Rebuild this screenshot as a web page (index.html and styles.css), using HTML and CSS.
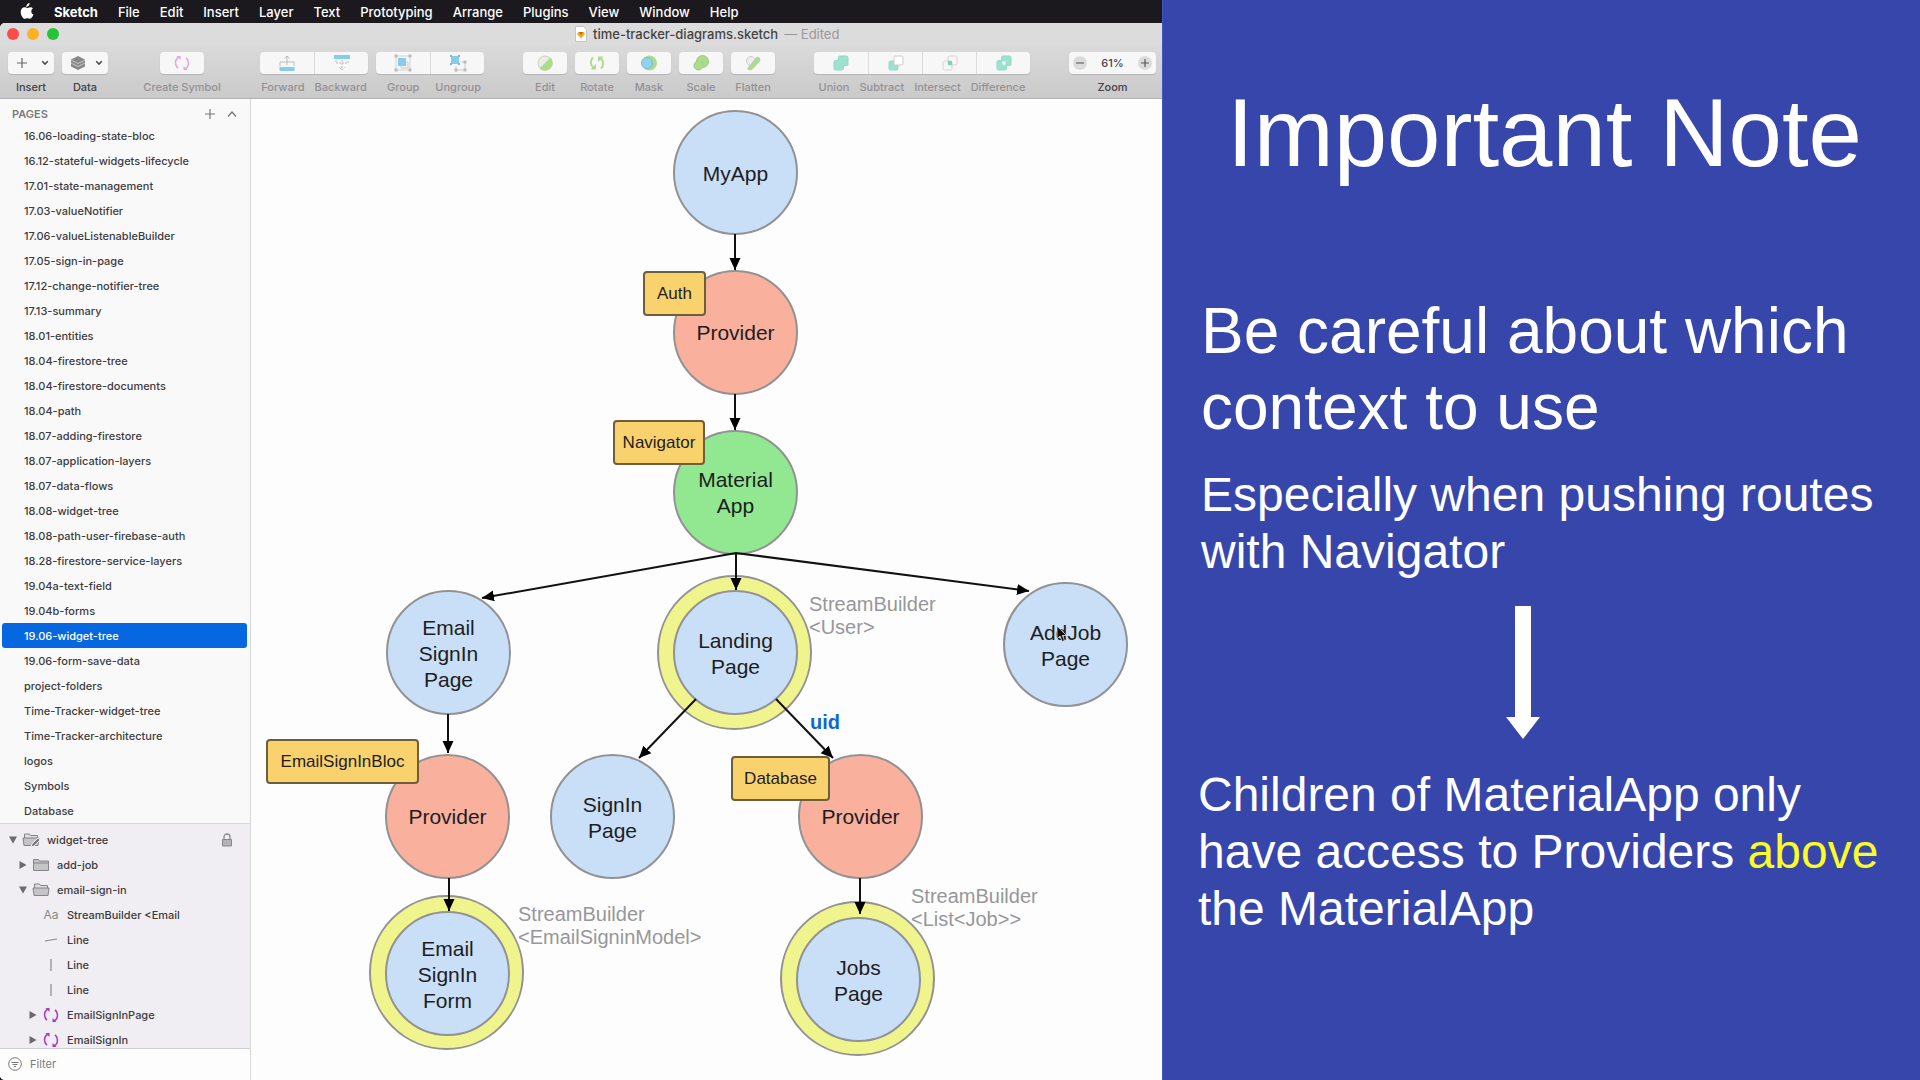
FILE: index.html
```html
<!DOCTYPE html>
<html lang="en">
<head>
<meta charset="utf-8">
<title>time-tracker-diagrams.sketch</title>
<link rel="stylesheet" href="styles.css">
</head>
<body>
<svg class="defs" aria-hidden="true">
  <symbol id="symbol-sync" viewBox="0 0 16 16"><path d="M6 1.500C2.500 3 1 6 1.800 9.500c.3 1.500 1 2.700 2.200 3.700M10 14.500c3.500-1.500 5-4.500 4.200-8-.3-1.500-1-2.700-2.200-3.700" fill="none" stroke="currentColor" stroke-width="1.500"/><path d="M2.500 1h4v4zM13.500 15h-4v-4z" fill="currentColor"/></symbol>
  <symbol id="symbol-folder" viewBox="0 0 18 16"><path d="M1.500 5V2.500h5l1 1.500h9v9.500h-15z" fill="#c4c3c6" stroke="#858487"/><path d="M1 6h16" stroke="#858487"/></symbol>
  <symbol id="symbol-folder-open" viewBox="0 0 18 16"><path d="M2.500 6V2h5l1 1.500h7V6" fill="#dddcdf" stroke="#858487"/><path d="M1 6h16l-1 7.500H2z" fill="#c4c3c6" stroke="#858487"/></symbol>
  <symbol id="symbol-right" viewBox="0 0 10 10"><path d="M1.500 1v8l7-4z" fill="#6b6a6d"/></symbol>
  <symbol id="symbol-down" viewBox="0 0 10 10"><path d="M1 1.500h8l-4 7z" fill="#6b6a6d"/></symbol>
  <symbol id="symbol-chevron" viewBox="0 0 8 6"><path d="M1.300 1.300 4 4.200l2.700-2.900" fill="none" stroke="#444" stroke-width="1.600"/></symbol>
</svg>

<main class="screen">
  <section class="desktop">
    <nav class="menubar" aria-label="Menu bar">
      <svg class="apple" viewBox="0 0 14 17" aria-hidden="true"><path d="M9.600 0c.1 1.200-.4 2.100-1 2.800-.6.700-1.500 1.200-2.300 1.100-.1-1.100.4-2.100 1-2.700C7.900.5 8.900.1 9.600 0zM12.900 5.600c-1 .7-1.600 1.600-1.600 2.900 0 1.500.9 2.600 2.100 3.100-.6 1.800-2 4.200-3.500 4.200-1 0-1.400-.6-2.600-.6s-1.600.6-2.500.6C2.900 15.800.7 12.200.7 9c0-3 1.900-4.700 3.900-4.700 1.100 0 2 .7 2.700.7.700 0 1.700-.8 3.100-.8 1 0 1.900.5 2.500 1.400z" fill="#fff"/></svg>
      <button class="menu menu-app">Sketch</button><button class="menu">File</button><button class="menu">Edit</button><button class="menu">Insert</button><button class="menu">Layer</button><button class="menu">Text</button><button class="menu">Prototyping</button><button class="menu">Arrange</button><button class="menu">Plugins</button><button class="menu">View</button><button class="menu">Window</button><button class="menu">Help</button>
    </nav>

    <div class="window">
      <header class="titlebar">
        <div class="lights">
          <button class="light light-close" aria-label="Close"></button><button class="light light-min" aria-label="Minimize"></button><button class="light light-max" aria-label="Zoom window"></button>
        </div>
        <div class="title">
          <svg width="12" height="16" viewBox="0 0 12 16" aria-hidden="true"><path d="M.5.500h8l3 3v12H.500z" fill="#fff" stroke="#c4c4c4"/><path d="M3.500 6h5L10 8l-4 4.500L2 8z" fill="#f6a623"/><path d="M4 6l2 3 2-3z" fill="#b96d10"/></svg>
          <h1 class="title-name">time-tracker-diagrams.sketch</h1><span class="title-state">— Edited</span>
        </div>
      </header>

      <div class="toolbar" role="toolbar" aria-label="Tools">
        <div class="tools">
          <div class="buttons"><button class="tool tool-menu" aria-labelledby="l-insert"><svg width="12" height="12" viewBox="0 0 12 12"><path d="M6 1v10M1 6h10" stroke="#666" stroke-width="1.200"/></svg><svg width="8" height="6"><use href="#symbol-chevron"/></svg></button></div>
          <div class="labels labels-on"><span id="l-insert">Insert</span></div>
        </div>
        <div class="tools">
          <div class="buttons"><button class="tool tool-menu" aria-labelledby="l-data"><svg width="16" height="16" viewBox="0 0 16 16"><path d="M1 4.500 8 1l7 3.500v7L8 15l-7-3.500z" fill="#888"/><path d="M1 5l7 3.500L15 5M1 8l7 3.500L15 8" fill="none" stroke="#c9c9c9"/></svg><svg width="8" height="6"><use href="#symbol-chevron"/></svg></button></div>
          <div class="labels labels-on"><span id="l-data">Data</span></div>
        </div>
        <div class="tools tools-symbol">
          <div class="buttons"><button class="tool tool-small sync-pale" aria-labelledby="l-create"><svg width="16" height="16"><use href="#symbol-sync"/></svg></button></div>
          <div class="labels"><span id="l-create">Create Symbol</span></div>
        </div>
        <div class="tools tools-order">
          <div class="buttons">
            <button class="tool" aria-labelledby="l-forward"><svg width="16" height="16" viewBox="0 0 16 16"><path d="M.5 12h15v4H.500z" fill="#86cdec"/><path d="M1 11V7h14v4M8 10V1M5.500 3.500 8 1l2.500 2.500" fill="none" stroke="#bbb"/></svg></button>
            <button class="tool" aria-labelledby="l-backward"><svg width="16" height="16" viewBox="0 0 16 16"><path d="M0 0h16v4H0z" fill="#86cdec"/><path d="M2 5v3h12V5M8 5v10M5.500 12.500 8 15l2.500-2.500" fill="none" stroke="#bbb" stroke-dasharray="2 1"/></svg></button>
          </div>
          <div class="labels"><span id="l-forward">Forward</span><span id="l-backward">Backward</span></div>
        </div>
        <div class="tools">
          <div class="buttons">
            <button class="tool" aria-labelledby="l-group"><svg width="18" height="18" viewBox="0 0 18 18"><path d="M11 8h3v6H7v-3" fill="#f4f4f4" stroke="#ccc"/><path d="M4 4h8v8H4z" fill="#86cdec"/><path d="M2 2h14v14H2z" fill="none" stroke="#d4d4d4"/><path d="M.5.500h3v3h-3zM14.500.500h3v3h-3zM.5 14.500h3v3h-3zM14.500 14.500h3v3h-3z" fill="#bbb"/></svg></button>
            <button class="tool" aria-labelledby="l-ungroup"><svg width="18" height="18" viewBox="0 0 18 18"><path d="M2 2h8v8H2z" fill="#86cdec"/><path d="M1 1h2v2H1zM9 1h2v2H9zM1 9h2v2H1zM9 9h2v2H9z" fill="#7fb6cf"/><path d="M12 8h4v8H7v-4" fill="none" stroke="#ccc"/><path d="M14.500 6.500h3v3h-3zM5.500 14.500h3v3h-3zM14.500 14.500h3v3h-3z" fill="#bbb"/></svg></button>
          </div>
          <div class="labels labels-wide"><span id="l-group">Group</span><span id="l-ungroup">Ungroup</span></div>
        </div>
        <div class="tools tools-edit">
          <div class="buttons"><button class="tool tool-small" aria-labelledby="l-edit"><svg width="16" height="16" viewBox="0 0 16 16"><circle cx="8" cy="8" r="7" fill="#e9eee4" stroke="#ccc"/><path d="M13.500 2.500A7.500 7.500 0 1 1 2.500 13.500z" fill="#acdc8b"/></svg></button></div>
          <div class="labels"><span id="l-edit">Edit</span></div>
        </div>
        <div class="tools">
          <div class="buttons"><button class="tool tool-small" aria-labelledby="l-rotate"><svg width="16" height="16" viewBox="0 0 16 16"><path d="M4 2.500C1.500 5 1 9 4 12.500M12 13.500c2.500-2.500 3-6.500 0-10" fill="none" stroke="#acdc8b" stroke-width="2"/><path d="M1.500 14.500H7V9zM14.500 1.500H9V7z" fill="#acdc8b"/></svg></button></div>
          <div class="labels"><span id="l-rotate">Rotate</span></div>
        </div>
        <div class="tools">
          <div class="buttons"><button class="tool tool-small" aria-labelledby="l-mask"><svg width="18" height="16" viewBox="0 0 18 16"><circle cx="9.500" cy="8" r="7.500" fill="#acdc8b"/><circle cx="7" cy="8" r="5.500" fill="#8fd3f2" stroke="#79bcd9"/></svg></button></div>
          <div class="labels"><span id="l-mask">Mask</span></div>
        </div>
        <div class="tools">
          <div class="buttons"><button class="tool tool-small" aria-labelledby="l-scale"><svg width="16" height="16" viewBox="0 0 16 16"><circle cx="9.500" cy="6.500" r="6" fill="#acdc8b" stroke="#9acb78"/><circle cx="5.500" cy="10.500" r="4.500" fill="#acdc8b" stroke="#9acb78"/><path d="M6 4l5 8-5 2-3-5z" fill="#acdc8b"/></svg></button></div>
          <div class="labels"><span id="l-scale">Scale</span></div>
        </div>
        <div class="tools">
          <div class="buttons"><button class="tool tool-small" aria-labelledby="l-flatten"><svg width="16" height="16" viewBox="0 0 16 16"><circle cx="6" cy="6" r="4.500" fill="#eee" stroke="#ccc"/><path d="M2.500 13.500 12 2q3 0 3 3.500L7 14.500q-3 1.500-4.500-1z" fill="#acdc8b" stroke="#bcc9b2"/></svg></button></div>
          <div class="labels"><span id="l-flatten">Flatten</span></div>
        </div>
        <div class="tools tools-boolean">
          <div class="buttons">
            <button class="tool" aria-labelledby="l-union"><svg width="16" height="16" viewBox="0 0 16 16"><path d="M7 1h6.500q1.500 0 1.500 1.500V9q0 1.500-1.500 1.500h-3v3q0 1.500-1.500 1.500H2.500Q1 15 1 13.500V7q0-1.500 1.500-1.500h3v-3Q5.500 1 7 1z" fill="#9ce3cf" stroke="#8fdac6"/></svg></button>
            <button class="tool" aria-labelledby="l-subtract"><svg width="16" height="16" viewBox="0 0 16 16"><rect x="1" y="6" width="9" height="9" rx="1.500" fill="#9ce3cf" stroke="#8fdac6"/><rect x="6" y="1" width="9" height="9" rx="1.500" fill="#fff" stroke="#ccc"/></svg></button>
            <button class="tool" aria-labelledby="l-intersect"><svg width="16" height="16" viewBox="0 0 16 16"><g fill="none" stroke="#d4d4d4"><rect x="1" y="6" width="9" height="9" rx="1.500"/><rect x="6" y="1" width="9" height="9" rx="1.500"/></g><path d="M6 6h4v4H6z" fill="#83cfba"/></svg></button>
            <button class="tool" aria-labelledby="l-difference"><svg width="16" height="16" viewBox="0 0 16 16"><path d="M7 1h6.500q1.500 0 1.500 1.500V9q0 1.500-1.500 1.500h-3v3q0 1.500-1.500 1.500H2.500Q1 15 1 13.500V7q0-1.500 1.500-1.500h3v-3Q5.500 1 7 1z" fill="#9ce3cf" stroke="#8fdac6"/><path d="M6.500 6.500h3v3h-3z" fill="#fff"/></svg></button>
          </div>
          <div class="labels"><span id="l-union">Union</span><span id="l-subtract">Subtract</span><span id="l-intersect">Intersect</span><span id="l-difference">Difference</span></div>
        </div>
        <div class="tools tools-zoom">
          <div class="zoombox"><button class="zoom" aria-label="Zoom out"><svg width="8" height="8" viewBox="0 0 8 8"><path d="M0 4h8" stroke="#555" stroke-width="1.200"/></svg></button><output class="zoom-value">61%</output><button class="zoom" aria-label="Zoom in"><svg width="8" height="8" viewBox="0 0 8 8"><path d="M0 4h8M4 0v8" stroke="#555" stroke-width="1.200"/></svg></button></div>
          <div class="labels labels-on"><span>Zoom</span></div>
        </div>
      </div>

      <div class="workspace">
        <aside class="sidebar">
          <div class="pages-head"><h2 class="pages-title">PAGES</h2>
            <button class="icon-button" aria-label="Add page"><svg width="12" height="12" viewBox="0 0 12 12"><path d="M6 1v10M1 6h10" stroke="#777" stroke-width="1.200"/></svg></button>
            <button class="icon-button" aria-label="Collapse pages"><svg width="12" height="12" viewBox="0 0 12 12"><path d="M2 8.500 6 4l4 4.500" fill="none" stroke="#777" stroke-width="1.300"/></svg></button>
          </div>
          <ul class="pages">
            <li><button class="page">16.06-loading-state-bloc</button></li>
            <li><button class="page">16.12-stateful-widgets-lifecycle</button></li>
            <li><button class="page">17.01-state-management</button></li>
            <li><button class="page">17.03-valueNotifier</button></li>
            <li><button class="page">17.06-valueListenableBuilder</button></li>
            <li><button class="page">17.05-sign-in-page</button></li>
            <li><button class="page">17.12-change-notifier-tree</button></li>
            <li><button class="page">17.13-summary</button></li>
            <li><button class="page">18.01-entities</button></li>
            <li><button class="page">18.04-firestore-tree</button></li>
            <li><button class="page">18.04-firestore-documents</button></li>
            <li><button class="page">18.04-path</button></li>
            <li><button class="page">18.07-adding-firestore</button></li>
            <li><button class="page">18.07-application-layers</button></li>
            <li><button class="page">18.07-data-flows</button></li>
            <li><button class="page">18.08-widget-tree</button></li>
            <li><button class="page">18.08-path-user-firebase-auth</button></li>
            <li><button class="page">18.28-firestore-service-layers</button></li>
            <li><button class="page">19.04a-text-field</button></li>
            <li><button class="page">19.04b-forms</button></li>
            <li><button class="page page-selected" aria-current="page">19.06-widget-tree</button></li>
            <li><button class="page">19.06-form-save-data</button></li>
            <li><button class="page">project-folders</button></li>
            <li><button class="page">Time-Tracker-widget-tree</button></li>
            <li><button class="page">Time-Tracker-architecture</button></li>
            <li><button class="page">logos</button></li>
            <li><button class="page">Symbols</button></li>
            <li><button class="page">Database</button></li>
          </ul>
          <ul class="layers">
            <li class="layer"><svg class="twist"><use href="#symbol-down"/></svg><span class="kind"><svg width="18" height="16" viewBox="0 0 18 16"><use href="#symbol-folder-open"/><path d="M9 15l1-3 6-6 2 2-6 6z" fill="#777" stroke="#f0eef1"/></svg></span><span class="layer-name">widget-tree</span><svg class="lock" width="12" height="14" viewBox="0 0 12 14"><path d="M3 6V4a3 3 0 0 1 6 0v2" fill="none" stroke="#8a898c" stroke-width="1.300"/><path d="M1.500 6.500h9v6.500h-9z" fill="#b4b3b6" stroke="#8a898c"/></svg></li>
            <li class="layer depth-1"><svg class="twist"><use href="#symbol-right"/></svg><span class="kind"><svg width="18" height="16"><use href="#symbol-folder"/></svg></span><span class="layer-name">add-job</span></li>
            <li class="layer depth-1"><svg class="twist"><use href="#symbol-down"/></svg><span class="kind"><svg width="18" height="16"><use href="#symbol-folder-open"/></svg></span><span class="layer-name">email-sign-in</span></li>
            <li class="layer depth-2"><span class="twist"></span><span class="kind kind-text">Aa</span><span class="layer-name">StreamBuilder &lt;Email</span></li>
            <li class="layer depth-2"><span class="twist"></span><span class="kind"><svg width="14" height="14" viewBox="0 0 14 14"><path d="M1 8l12-2" stroke="#8a898c" stroke-width="1.200"/></svg></span><span class="layer-name">Line</span></li>
            <li class="layer depth-2"><span class="twist"></span><span class="kind"><svg width="14" height="14" viewBox="0 0 14 14"><path d="M7 1v12" stroke="#8a898c" stroke-width="1.200"/></svg></span><span class="layer-name">Line</span></li>
            <li class="layer depth-2"><span class="twist"></span><span class="kind"><svg width="14" height="14" viewBox="0 0 14 14"><path d="M7 1v12" stroke="#8a898c" stroke-width="1.200"/></svg></span><span class="layer-name">Line</span></li>
            <li class="layer depth-2"><svg class="twist"><use href="#symbol-right"/></svg><span class="kind sync"><svg width="16" height="16"><use href="#symbol-sync"/></svg></span><span class="layer-name">EmailSignInPage</span></li>
            <li class="layer depth-2"><svg class="twist"><use href="#symbol-right"/></svg><span class="kind sync"><svg width="16" height="16"><use href="#symbol-sync"/></svg></span><span class="layer-name">EmailSignIn</span></li>
          </ul>
          <label class="filter"><svg width="14" height="14" viewBox="0 0 14 14" aria-hidden="true"><circle cx="7" cy="7" r="6.300" fill="none" stroke="#777"/><path d="M3.500 5.500h7M4.500 7.500h5M6 9.500h2" stroke="#777"/></svg><input class="filter-input" type="text" placeholder="Filter" aria-label="Filter"></label>
        </aside>

        <div class="canvas">
          <div class="node ring at-landing-ring"></div>
          <div class="node ring at-form-ring"></div>
          <div class="node ring at-jobs-ring"></div>
          <div class="node blue at-myapp">MyApp</div>
          <div class="node red at-provider-auth">Provider</div>
          <div class="node green at-material">Material<br>App</div>
          <div class="node blue at-email-page">Email<br>SignIn<br>Page</div>
          <div class="node blue at-landing">Landing<br>Page</div>
          <div class="node blue at-addjob">AddJob<br>Page</div>
          <div class="node red at-provider-email">Provider</div>
          <div class="node blue at-signin">SignIn<br>Page</div>
          <div class="node red at-provider-db">Provider</div>
          <div class="node blue at-form">Email<br>SignIn<br>Form</div>
          <div class="node blue at-jobs">Jobs<br>Page</div>
          <svg class="links" width="912" height="981" viewBox="250 99 912 981" aria-hidden="true">
            <defs><marker id="head" viewBox="0 0 12 12" refX="12" refY="6" markerWidth="12" markerHeight="12" markerUnits="userSpaceOnUse" orient="auto"><path d="M0 0.500 12 6 0 11.500z"/></marker></defs>
            <g stroke="#111" stroke-width="2" marker-end="url(#head)">
              <path d="M735 234V270"/><path d="M735 394V430"/><path d="M736 553V590"/>
              <path d="M736 553 482 598"/><path d="M736 553 1029 591"/>
              <path d="M448 714V753"/><path d="M449 878V911"/>
              <path d="M696 699 639 758"/><path d="M776 699 833 758"/><path d="M860 878V914"/>
            </g>
          </svg>
          <div class="tag at-tag-auth">Auth</div>
          <div class="tag at-tag-nav">Navigator</div>
          <div class="tag at-tag-bloc">EmailSignInBloc</div>
          <div class="tag at-tag-db">Database</div>
          <div class="note at-note-user">StreamBuilder<br>&lt;User&gt;</div>
          <div class="note at-note-model">StreamBuilder<br>&lt;EmailSigninModel&gt;</div>
          <div class="note at-note-list">StreamBuilder<br>&lt;List&lt;Job&gt;&gt;</div>
          <div class="note uid at-uid">uid</div>
          <svg class="cursor" width="12" height="18" viewBox="0 0 12 18" aria-hidden="true"><path d="M1 1v13l3-3 2.200 5.500 2.300-1L6.300 10.500H10.500z" fill="#111" stroke="#ddd" stroke-width=".8"/></svg>
        </div>
      </div>
    </div>
  </section>

  <section class="slide">
    <h2 class="slide-title">Important Note</h2>
    <p class="lead">Be careful about which context to use</p>
    <p class="body">Especially when pushing routes with Navigator</p>
    <svg class="slide-arrow" width="34" height="133" viewBox="0 0 34 133" aria-hidden="true"><path d="M9 0h16v111h9l-17 22L0 111h9z" fill="#fff"/></svg>
    <p class="body body-last">Children of MaterialApp only have access to Providers <em class="above">above</em> the MaterialApp</p>
  </section>
</main>
</body>
</html>
```
FILE: styles.css
```css
* { box-sizing: border-box; }
body { margin: 0; font-family: Inter, "Liberation Sans", sans-serif; }
h1, h2, p, ul { margin: 0; padding: 0; font-weight: inherit; font-size: inherit; }
ul { list-style: none; }
button { margin: 0; padding: 0; border: 0; background: none; font: inherit; color: inherit; }
svg { display: block; flex: none; }
.defs { position: absolute; width: 0; height: 0; }

.screen { display: grid; grid-template-columns: 1162fr 758fr; height: 100vh; min-height: 600px; }
.desktop { display: flex; flex-direction: column; min-width: 0; min-height: 0; overflow: hidden; background: #1b191e; }

/* Menu bar */
.menubar { display: flex; align-items: center; gap: 20px; height: 23px; flex: none; padding-left: 20px; color: #fff; font-size: 13px; font-weight: 500; line-height: 22px; white-space: nowrap; }
.apple { width: 14px; height: 17px; }
.menu-app { font-weight: 700; }

/* Window chrome */
.window { display: flex; flex-direction: column; flex: 1; min-height: 0; border-radius: 5px 0 0 5px; overflow: hidden; background: #fdfdfd; }
.titlebar { display: flex; align-items: center; height: 22px; flex: none; background: #dddcdd; white-space: nowrap; font-size: 13px; }
.lights { display: flex; gap: 8px; padding-left: 7px; }
.light { width: 12px; height: 12px; border-radius: 50%; }
.light-close { background: #fb4e49; }
.light-min { background: #fdb224; }
.light-max { background: #29c23b; }
.title { display: flex; align-items: center; gap: 6px; margin-left: 516px; }
.title-name { color: #444; font-weight: 500; }
.title-state { color: #999; }

.toolbar { display: flex; align-items: flex-start; gap: 8px; flex: none; padding: 7px 6px 4px 8px; background: linear-gradient(#dbdadb, #cbcacb); border-bottom: 1px solid #b3b1b4; overflow: hidden; }
.tools { display: flex; flex-direction: column; align-items: center; gap: 6px; flex: none; }
.tools-symbol { width: 44px; margin-left: 44px; }
.tools-order { margin-left: 48px; }
.tools-edit { margin-left: 31px; }
.tools-boolean { margin-left: 31px; }
.tools-zoom { margin-left: 31px; }
.buttons, .zoombox { display: flex; height: 22px; border-radius: 4px; background: #f8f7f8; box-shadow: 0 1px 1px #b5b4b6; }
.tool { display: flex; align-items: center; justify-content: center; width: 54px; height: 22px; }
.tool + .tool { border-left: 1px solid #dcdbdc; }
.tool-menu { width: 46px; justify-content: space-between; padding: 0 5px 0 8px; }
.tool-small { width: 44px; }
.sync-pale { color: #dfa6e6; }
.labels { display: flex; justify-content: center; gap: 10px; width: 0; font-size: 11px; line-height: 14px; font-weight: 500; color: #929193; white-space: nowrap; }
.labels-wide { gap: 16px; padding-left: 8px; }
.labels-on { color: #424143; }
.zoombox { align-items: center; justify-content: space-between; width: 87px; padding: 0 4px; }
.zoom { display: flex; align-items: center; justify-content: center; width: 14px; height: 14px; border-radius: 50%; background: #dcdbdc; }
.zoom-value { font-size: 11px; font-weight: 500; color: #444; }

/* Sidebar */
.workspace { display: flex; flex: 1; min-height: 0; }
.sidebar { display: flex; flex-direction: column; width: 251px; flex: none; background: #f9f9fa; border-right: 1px solid #d8d7d9; font-size: 11px; font-weight: 500; color: #3d3c3f; }
.pages-head { display: flex; align-items: center; gap: 10px; height: 24px; flex: none; padding: 5px 12px 0 12px; }
.pages-title { flex: 1; font-size: 11px; font-weight: 600; color: #7b7a7d; }
.pages { flex: none; padding: 0 3px 0 2px; }
.page { display: block; width: 100%; height: 25px; padding-left: 22px; border-radius: 3px; text-align: left; }
.page-selected { background: #0668e1; color: #fff; }
.layers { flex: 1; min-height: 0; overflow: hidden; padding: 3px 17px 0 5px; background: #f0eef2; border-top: 1px solid #d8d7d9; }
.layer { display: flex; align-items: center; height: 25px; }
.depth-1 { padding-left: 10px; }
.depth-2 { padding-left: 20px; }
.twist { width: 16px; height: 10px; flex: none; }
.kind { display: flex; justify-content: center; width: 20px; margin-right: 6px; flex: none; }
.kind-text { font-size: 12px; font-weight: 400; color: #8a898c; }
.sync { color: #a63bbd; }
.layer-name { flex: 1; white-space: nowrap; }
.filter { display: flex; align-items: center; gap: 8px; height: 32px; flex: none; padding: 0 0 2px 8px; background: #fdfdfe; border-top: 1px solid #d0cfd2; }
.filter-input { flex: 1; min-width: 0; padding: 0; border: 0; background: none; font: inherit; font-weight: 400; outline: 0; }
.filter-input::placeholder { color: #7b7a7d; opacity: 1; }

/* Canvas: nodes sit at free coordinates */
.canvas { position: relative; flex: 1; min-width: 0; margin-left: -1px; overflow: hidden; background: #fdfdfd; background-clip: padding-box; border-left: 1px solid #d8d7d9; font-family: "Liberation Sans", Arial, sans-serif; color: #1d1d22; }
.node { position: absolute; display: flex; align-items: center; justify-content: center; width: 125px; height: 125px; padding-top: 2px; border: 2px solid #929294; border-radius: 50%; font-size: 21px; line-height: 26px; text-align: center; }
.blue { background: #c9dff7; }
.red { background: #f9b19e; padding-top: 0; }
.green { background: #91e891; padding-top: 0; }
.ring { width: 155px; height: 155px; background: #f0f48d; }
.at-myapp { left: 422px; top: 11px; }
.at-provider-auth { left: 422px; top: 171px; }
.at-material { left: 422px; top: 331px; }
.at-email-page { left: 135px; top: 491px; }
.at-landing { left: 422px; top: 491px; }
.at-landing-ring { left: 406px; top: 476px; }
.at-addjob { left: 752px; top: 483px; }
.at-provider-email { left: 134px; top: 655px; }
.at-signin { left: 299px; top: 655px; }
.at-provider-db { left: 547px; top: 655px; }
.at-form-ring { left: 118px; top: 796px; }
.at-form { left: 134px; top: 812px; }
.at-jobs-ring { left: 529px; top: 802px; }
.at-jobs { left: 545px; top: 818px; }
.links { position: absolute; left: -1px; top: 0; }
.tag { position: absolute; display: flex; align-items: center; justify-content: center; height: 45px; border: 2px solid #6e5f3c; border-radius: 4px; background: #fad26d; font-size: 17px; }
.at-tag-auth { left: 392px; top: 172px; width: 63px; }
.at-tag-nav { left: 362px; top: 321px; width: 92px; }
.at-tag-bloc { left: 15px; top: 640px; width: 153px; }
.at-tag-db { left: 480px; top: 657px; width: 99px; }
.note { position: absolute; font-size: 20px; line-height: 23px; color: #97979a; white-space: nowrap; }
.uid { font-weight: 700; color: #0c66d4; }
.at-note-user { left: 558px; top: 494px; }
.at-note-model { left: 267px; top: 804px; }
.at-note-list { left: 660px; top: 786px; }
.at-uid { left: 559px; top: 612px; }
.cursor { position: absolute; left: 805px; top: 526px; }

/* Slide */
.slide { padding: 77px 40px 0 38px; min-width: 0; overflow: hidden; background: #3746ab; border-left: 1px solid #4455c4; color: #fff; font-family: "Liberation Sans", Arial, sans-serif; }
.slide-title { padding-left: 8px; font-size: 96px; line-height: 112px; text-align: center; white-space: nowrap; }
.lead { margin-top: 104px; font-size: 64px; line-height: 76px; }
.body { margin-top: 21px; font-size: 48px; line-height: 57px; }
.slide-arrow { margin: 26px auto 0; padding-right: 36px; box-sizing: content-box; }
.body-last { margin: 27px 0 0 -3px; }
.above { font-style: normal; color: #fbfb28; }
```
